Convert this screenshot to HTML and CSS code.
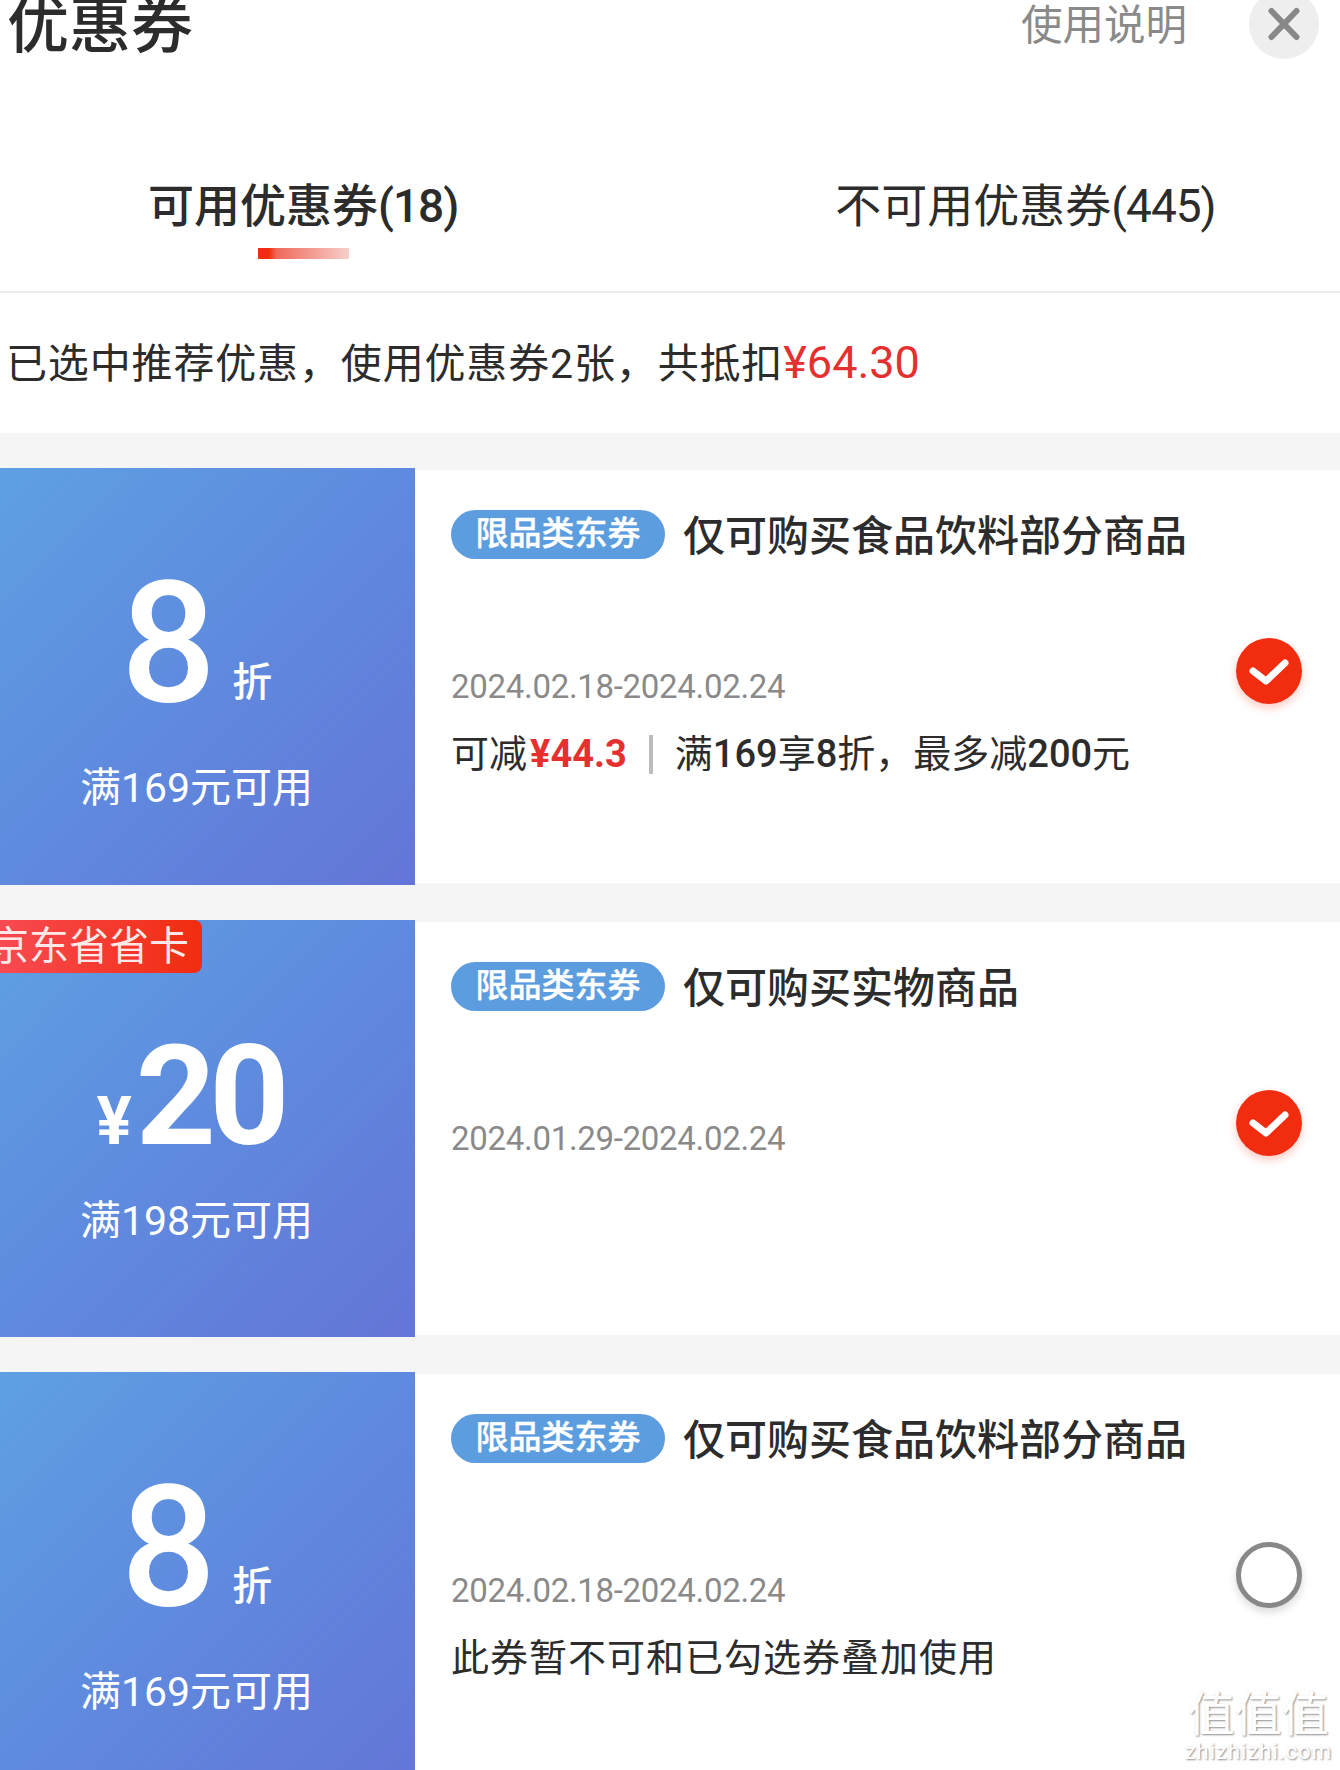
FILE: index.html
```html
<!DOCTYPE html>
<html lang="zh-CN">
<head>
<meta charset="utf-8">
<title>优惠券</title>
<link rel="stylesheet" href="styles.css">
</head>
<body>
<div class="page">
  <header class="head">
    <h1 class="title">优惠券</h1>
    <span class="help">使用说明</span>
    <span class="close">
      <svg width="70" height="70" viewBox="0 0 70 70"><path d="M22.500 22L47.500 48M47.500 22L22.500 48" fill="none" stroke="#888" stroke-width="6" stroke-linecap="round"/></svg>
    </span>
  </header>
  <nav class="tabs">
    <div class="tab tab-on"><span>可用优惠券<span class="num">(18)</span></span><i class="bar"></i></div>
    <div class="tab"><span>不可用优惠券<span class="num">(445)</span></span></div>
  </nav>
  <div class="info">已选中推荐优惠，使用优惠券2张，共抵扣<em>¥64.30</em></div>
  <main class="list">
    <article class="coupon">
      <div class="left">
        <div class="value value-off"><span class="big">8</span><span class="unit">折</span></div>
        <div class="cond cond-off">满169元可用</div>
      </div>
      <div class="right">
        <div class="main">
          <div class="top"><span class="badge">限品类东券</span><span class="name">仅可购买食品饮料部分商品</span></div>
          <div class="date">2024.02.18-2024.02.24</div>
          <div class="detail">可减<b class="save">¥44.3</b><i class="sep"></i>满<b>169</b>享<b>8</b>折，最多减<b>200</b>元</div>
        </div>
        <span class="mark">
          <svg width="66" height="66" viewBox="0 0 66 66"><circle cx="33" cy="33" r="33" fill="#f12c0f"/><path d="M17 33L30 43L49 25" fill="none" stroke="#fff" stroke-width="7" stroke-linecap="round" stroke-linejoin="round"/></svg>
        </span>
      </div>
    </article>
    <article class="coupon">
      <div class="left">
        <span class="tag"><span class="tag-text">京东省省卡</span></span>
        <div class="value value-cash"><span class="yen">¥</span><span class="amount">20</span></div>
        <div class="cond cond-cash">满198元可用</div>
      </div>
      <div class="right">
        <div class="main">
          <div class="top"><span class="badge">限品类东券</span><span class="name">仅可购买实物商品</span></div>
          <div class="date">2024.01.29-2024.02.24</div>
        </div>
        <span class="mark">
          <svg width="66" height="66" viewBox="0 0 66 66"><circle cx="33" cy="33" r="33" fill="#f12c0f"/><path d="M17 33L30 43L49 25" fill="none" stroke="#fff" stroke-width="7" stroke-linecap="round" stroke-linejoin="round"/></svg>
        </span>
      </div>
    </article>
    <article class="coupon">
      <div class="left">
        <div class="value value-off"><span class="big">8</span><span class="unit">折</span></div>
        <div class="cond cond-off">满169元可用</div>
      </div>
      <div class="right">
        <div class="main">
          <div class="top"><span class="badge">限品类东券</span><span class="name">仅可购买食品饮料部分商品</span></div>
          <div class="date">2024.02.18-2024.02.24</div>
          <div class="detail detail-wide">此券暂不可和已勾选券叠加使用</div>
        </div>
        <span class="mark mark-empty"></span>
      </div>
    </article>
  </main>
  <div class="watermark"><span class="wm-logo">值值值</span><span class="wm-url">zhizhizhi.com</span></div>
</div>
</body>
</html>
```
FILE: styles.css
```css
* { box-sizing: border-box; }
html, body { margin: 0; padding: 0; overflow: hidden; }
body {
  font-family: Roboto, "Noto Sans CJK SC", sans-serif;
  color: #2c2c2c;
  background: #f5f5f5;
}
.page { position: relative; width: 1340px; height: 1770px; overflow: hidden; background: #fff; }

.head { display: flex; align-items: center; height: 70px; margin-top: -11px; padding: 0 21px 0 7px; }
.title { margin: 0; padding-top: 6px; font-size: 62px; line-height: 70px; font-weight: 500; }
.help { margin-left: auto; padding-top: 3px; font-size: 41.5px; line-height: 70px; color: #8a8a8a; }
.close { display: block; width: 70px; height: 70px; margin-left: 62px; border-radius: 50%; background: #eee; }
.close svg { display: block; }

.tabs { display: flex; align-items: flex-start; gap: 377px; height: 118px; margin-top: 116px; padding-left: 148px; border-bottom: 2px solid #eee; }
.tab { display: flex; flex-direction: column; align-items: center; padding-top: 1px; font-size: 46px; line-height: 60px; white-space: nowrap; }
.tab-on { font-weight: 500; }
.num { letter-spacing: -1px; }
.bar { display: block; width: 91px; height: 11px; margin-top: 12px; background: linear-gradient(90deg, #f12c0f 0, #f12c0f 12%, #f0695a 20%, #f6cfca 100%); }

.info { height: 140px; padding-left: 6px; font-size: 41px; line-height: 140px; letter-spacing: .85px; white-space: nowrap; }
.info em { font-style: normal; font-size: 45px; letter-spacing: 0; color: #e63030; }

.list { display: flex; flex-direction: column; gap: 35px; padding-top: 35px; background: #f5f5f5; }
.coupon { display: flex; flex: none; height: 417px; }

.left { position: relative; flex: none; width: 415px; overflow: hidden; color: #fff; background: linear-gradient(135deg, #5ea0e3 0%, #5f8ade 50%, #6475d7 100%); }
.value { display: flex; justify-content: center; padding-right: 22px; }
.value-off { align-items: flex-end; padding-top: 91px; }
.value-cash { align-items: baseline; padding-top: 107px; padding-right: 36px; }
.big { font-size: 168px; line-height: 170px; font-weight: 500; }
.unit { margin: 0 0 26px 16px; font-size: 40px; line-height: 40px; font-weight: 500; }
.yen { margin-right: 4px; font-size: 66px; line-height: 62px; font-weight: 700; }
.amount { font-size: 140px; line-height: 138px; font-weight: 700; letter-spacing: -7px; }
.cond { padding-right: 22px; font-size: 41px; line-height: 50px; text-align: center; white-space: nowrap; }
.cond-off { margin-top: 34px; }
.cond-cash { margin-top: 31px; }

.tag { position: absolute; top: 0; left: 0; width: 202px; height: 53px; overflow: hidden; border-radius: 0 8px 8px 0; color: #ffe8e8; background: linear-gradient(90deg, #f84a52, #f12c0f); }
.tag-text { display: block; margin-left: -11px; font-size: 40px; line-height: 53px; white-space: nowrap; }

.right { display: flex; align-items: flex-start; flex: 1; margin: 2px 0; padding: 40px 38px 0 36px; background: #fff; }
.main { flex: 1; min-width: 0; }
.top { display: flex; align-items: center; height: 49px; }
.badge { flex: none; width: 214px; height: 49px; border-radius: 25px; color: #fff; background: #5b9ddf; font-size: 33px; line-height: 48px; font-weight: 500; -webkit-text-stroke: .4px #fff; text-align: center; }
.name { margin-left: 18px; padding-bottom: 4px; font-size: 42px; font-weight: 500; white-space: nowrap; }
.date { margin-top: 108px; color: #8a8a8a; font-size: 33px; line-height: 40px; letter-spacing: -.3px; white-space: nowrap; }
.detail { display: flex; align-items: center; margin-top: 22px; font-size: 38px; line-height: 50px; white-space: nowrap; }
.detail b { font-weight: 500; }
.detail-wide { letter-spacing: 1px; }
.detail .save { margin-left: 3px; color: #e63030; font-weight: 700; }
.sep { display: block; width: 4px; height: 39px; margin: 0 22px 0 22px; background: #bdbdbd; }
.mark { display: block; flex: none; width: 66px; height: 66px; margin-top: 128px; border-radius: 50%; box-shadow: 0 4px 9px rgba(241, 44, 15, .25); }
.mark svg { display: block; }
.mark-empty { border: 5px solid #888; background: #fff; box-shadow: 0 4px 9px rgba(0, 0, 0, .15); }

.watermark { position: absolute; right: 8px; bottom: 6px; display: flex; flex-direction: column; align-items: center; color: #fff; text-shadow: 1px 1px 2px rgba(0, 0, 0, .45); }
.wm-logo { font-size: 47px; line-height: 50px; white-space: nowrap; }
.wm-url { font-size: 22px; line-height: 24px; letter-spacing: 1px; }
```
